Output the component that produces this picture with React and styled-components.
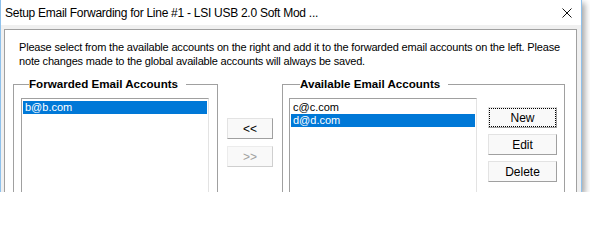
import React from "react";
import styled, { createGlobalStyle } from "styled-components";

const GlobalStyle = createGlobalStyle`
  body {
    margin: 0;
    background: #ffffff;
    font-family: "Liberation Sans", Arial, sans-serif;
  }
`;

const Window = styled.div`
  width: 580px;
  height: 192px;
  border-left: 1px solid #8ec1ec;
  border-right: 1px solid #8ec1ec;
  background: #f0f0f0;
  box-shadow: 3px 3px 6px rgba(0, 0, 0, 0.35);
  display: flex;
  flex-direction: column;
  overflow: hidden;
`;

const TitleBar = styled.div`
  height: 25px;
  flex: none;
  background: #ffffff;
  display: flex;
  align-items: center;
  justify-content: space-between;
  padding: 0 9px 0 4px;
`;

const TitleText = styled.span`
  font-size: 12px;
  letter-spacing: -0.27px;
  color: #000;
  white-space: nowrap;
`;

const CloseIcon = styled.svg`
  width: 10px;
  height: 10px;
  margin-top: 1px;
`;

const Body = styled.div`
  flex: 1;
  padding: 4px 4px 0 3px;
  display: flex;
`;

const Panel = styled.div`
  flex: 1;
  background: #ffffff;
  border: 1px solid #a0a0a0;
  border-bottom: none;
  padding: 10px 11px 0 8px;
`;

const Intro = styled.p`
  margin: 0 0 0 6px;
  font-size: 11px;
  letter-spacing: -0.18px;
  line-height: 14px;
  white-space: nowrap;
  color: #000;
`;

const Groups = styled.div`
  margin-top: 9px;
  display: grid;
  grid-template-columns: 205px 64px 283px;
  align-items: start;
`;

const Group = styled.fieldset`
  margin: 0;
  min-width: 0;
  height: 140px;
  border: 1px solid #a0a0a0;
  padding: 0 ${(p) => p.$padRight}px 0 ${(p) => p.$padLeft}px;
  display: flex;
  align-items: flex-start;
  gap: 11px;
`;

const Legend = styled.legend`
  margin-left: ${(p) => p.$offset}px;
  padding: 0 8px 0 0;
  font-size: 11.6px;
  font-weight: bold;
  line-height: 14px;
  color: #000;
`;

const ListBox = styled.div`
  flex: 1;
  height: 120px;
  margin-top: 7px;
  padding: 2px 1px;
  background: #ffffff;
  border: 1px solid;
  border-color: #a0a0a0 #e3e3e3 #e3e3e3 #a0a0a0;
`;

const Item = styled.div`
  height: 13px;
  line-height: 13px;
  padding-left: 2px;
  font-size: 11px;
  color: ${(p) => (p.$selected ? "#ffffff" : "#000000")};
  background: ${(p) => (p.$selected ? "#0078d7" : "transparent")};
`;

const MoveColumn = styled.div`
  padding-top: 41px;
  display: flex;
  flex-direction: column;
  align-items: center;
  gap: 7px;
`;

const ButtonColumn = styled.div`
  width: 69px;
  margin-top: 16px;
  display: flex;
  flex-direction: column;
  gap: 6px;
`;

const Button = styled.button`
  width: ${(p) => p.$width}px;
  height: 21px;
  padding: 0;
  font-family: "Liberation Sans", Arial, sans-serif;
  font-size: 12px;
  color: ${(p) => (p.disabled ? "#a0a0a0" : "#000000")};
  background: #f9f9f9;
  border: 1px solid;
  border-color: ${(p) =>
    p.disabled ? "#ececec #cfcfcf #cfcfcf #ececec" : "#e3e3e3 #a0a0a0 #a0a0a0 #e3e3e3"};
  outline: ${(p) => (p.$focused ? "1px dotted #000" : "none")};
  outline-offset: -2px;
`;

const forwarded = [{ address: "b@b.com", selected: true }];
const available = [
  { address: "c@c.com", selected: false },
  { address: "d@d.com", selected: true },
];

export default function App() {
  return (
    <>
      <GlobalStyle />
      <Window>
        <TitleBar>
          <TitleText>Setup Email Forwarding for Line #1 - LSI USB 2.0 Soft Mod ...</TitleText>
          <CloseIcon viewBox="0 0 10 10">
            <path d="M0.5 0.5 L9.5 9.5 M9.5 0.5 L0.5 9.5" stroke="#111" strokeWidth="1" fill="none" />
          </CloseIcon>
        </TitleBar>
        <Body>
          <Panel>
            <Intro>
              Please select from the available accounts on the right and add it to the forwarded email accounts on the left. Please
              <br />
              note changes made to the global available accounts will always be saved.
            </Intro>
            <Groups>
              <Group $padLeft={7} $padRight={8}>
                <Legend $offset={8}>Forwarded Email Accounts</Legend>
                <ListBox>
                  {forwarded.map((f) => (
                    <Item key={f.address} $selected={f.selected}>
                      {f.address}
                    </Item>
                  ))}
                </ListBox>
              </Group>
              <MoveColumn>
                <Button $width={46}>&lt;&lt;</Button>
                <Button $width={46} disabled>
                  &gt;&gt;
                </Button>
              </MoveColumn>
              <Group $padLeft={6} $padRight={7}>
                <Legend $offset={11}>Available Email Accounts</Legend>
                <ListBox>
                  {available.map((a) => (
                    <Item key={a.address} $selected={a.selected}>
                      {a.address}
                    </Item>
                  ))}
                </ListBox>
                <ButtonColumn>
                  <Button $width={69} $focused>
                    New
                  </Button>
                  <Button $width={69}>Edit</Button>
                  <Button $width={69}>Delete</Button>
                </ButtonColumn>
              </Group>
            </Groups>
          </Panel>
        </Body>
      </Window>
    </>
  );
}
